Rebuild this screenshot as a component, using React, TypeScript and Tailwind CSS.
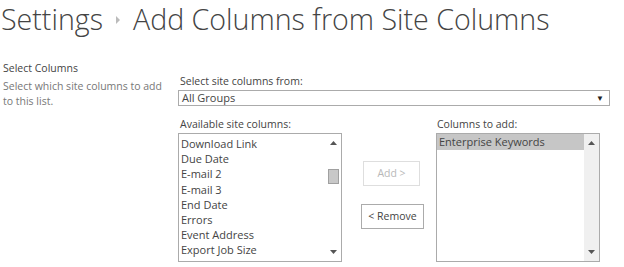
import { FC } from "react";

const available = [
  "Download Link",
  "Due Date",
  "E-mail 2",
  "E-mail 3",
  "End Date",
  "Errors",
  "Event Address",
  "Export Job Size",
];

const UpArrow: FC = () => (
  <svg width="7" height="4" viewBox="0 0 7 4" className="fill-[#555]">
    <polygon points="0,4 7,4 3.5,0" />
  </svg>
);

const DownArrow: FC = () => (
  <svg width="7" height="4" viewBox="0 0 7 4" className="fill-[#555]">
    <polygon points="0,0 7,0 3.5,4" />
  </svg>
);

const App: FC = () => {
  return (
    <div className="h-[267px] w-[624px] overflow-hidden bg-white font-['Open_Sans','Noto_Sans',sans-serif] text-[#444]">
      <h1 className="flex h-[38px] items-center pl-[1px] text-[28.6px] leading-[38px] font-light text-[#444]">
        <span>Settings</span>
        <span className="mx-[13px] mt-[2px] inline-block h-0 w-0 border-y-[4px] border-l-[4px] border-y-transparent border-l-[#bbb]" />
        <span>Add Columns from Site Columns</span>
      </h1>

      <div className="mt-[23px] flex">
        <div className="w-[178px] pl-[3px]">
          <p className="text-[10.5px] leading-[14px] text-[#444]">Select Columns</p>
          <p className="mt-[4px] w-[168px] text-[10.5px] leading-[15px] text-[#777]">
            Select which site columns to add to this list.
          </p>
        </div>

        <div className="flex w-[432px] flex-col">
          <p className="pl-[2px] pt-[13px] text-[10.5px] leading-[15px]">Select site columns from:</p>
          <div className="mt-[1px] flex h-[16px] items-center justify-between border border-[#ababab] bg-white pl-[3px] pr-[5px] text-[11px]">
            <span className="leading-[14px]">All Groups</span>
            <span className="text-[8px] leading-none text-[#222]">▼</span>
          </div>

          <div className="mt-[11px] flex">
            <div className="flex w-[164px] flex-col">
              <p className="pl-[2px] text-[10.5px] leading-[15px]">Available site columns:</p>
              <div className="mt-[1px] flex h-[129px] border border-[#ababab] bg-white">
                <ul className="flex-1 pl-[2px] pt-[2px]">
                  {available.map((item) => (
                    <li key={item} className="h-[15.2px] text-[11px] leading-[15px] whitespace-nowrap">
                      {item}
                    </li>
                  ))}
                </ul>
                <div className="flex w-[15px] flex-col items-center justify-between py-[7px]">
                  <UpArrow />
                  <div className="mb-auto mt-[24px] h-[15px] w-[11px] border border-[#a0a0a0] bg-[#c8c8c8]" />
                  <DownArrow />
                </div>
              </div>
            </div>

            <div className="flex w-[94px] flex-col items-center pl-[5px] pt-[44px]">
              <button className="h-[25px] w-[57px] border border-[#dedede] bg-white text-[10.5px] text-[#b8b8b8]">
                Add &gt;
              </button>
              <button className="mt-[18px] ml-[2px] h-[25px] w-[63px] border border-[#ababab] bg-white text-[10.5px] text-[#444]">
                &lt; Remove
              </button>
            </div>

            <div className="flex w-[164px] flex-col">
              <p className="pl-[1px] text-[10.5px] leading-[15px]">Columns to add:</p>
              <div className="mt-[1px] flex h-[129px] border border-[#ababab] bg-white">
                <ul className="flex-1">
                  <li className="h-[16px] bg-[#c6c6c6] pl-[2px] text-[11px] leading-[16px] whitespace-nowrap">
                    Enterprise Keywords
                  </li>
                </ul>
                <div className="flex w-[15px] flex-col items-center justify-between bg-[#f0f0f0] py-[7px]">
                  <UpArrow />
                  <DownArrow />
                </div>
              </div>
            </div>
          </div>
        </div>
      </div>
    </div>
  );
};

export default App;
